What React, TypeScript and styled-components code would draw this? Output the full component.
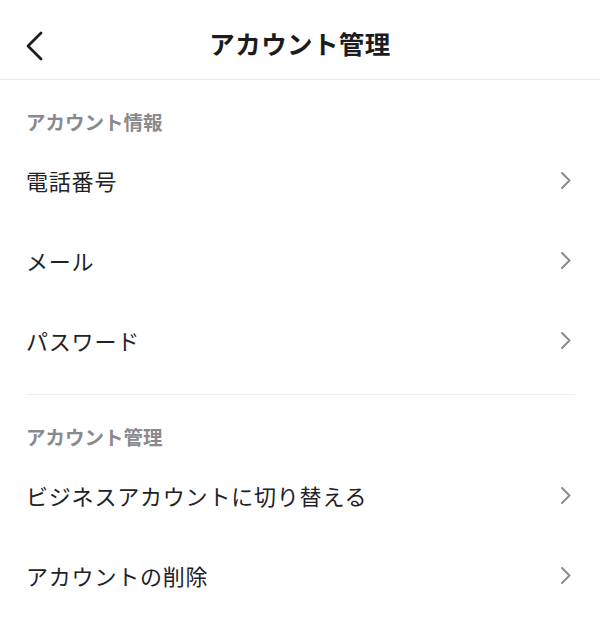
import React from "react";
import styled, { createGlobalStyle } from "styled-components";

const Global = createGlobalStyle`
  html, body { margin: 0; padding: 0; background: #ffffff; }
  body { font-family: "Noto Sans CJK JP", "Noto Sans", sans-serif; color: #1f1f22; }
`;

const Page = styled.div`
  width: 600px;
  min-height: 633px;
  background: #fff;
`;

const Header = styled.header`
  height: 80px;
  box-sizing: border-box;
  padding-top: 4px;
  border-bottom: 1px solid #e9e9ea;
  display: grid;
  grid-template-columns: 80px 1fr 80px;
  align-items: center;
`;

const BackButton = styled.button`
  border: 0;
  background: none;
  padding: 0 0 0 25px;
  margin-top: 8px;
  height: 40px;
  display: flex;
  align-items: center;
  cursor: pointer;
  color: #1c1c1e;
`;

const Title = styled.h1`
  margin: 0;
  padding-top: 2px;
  text-align: center;
  font-size: 25.5px;
  font-weight: 700;
  letter-spacing: 0.4px;
  line-height: 32px;
  color: #1c1c1e;
`;

const Section = styled.section`
  padding-top: 30px;
`;

const SectionTitle = styled.h2`
  margin: 0 0 6px;
  padding: 0 26px;
  font-size: 19.5px;
  line-height: 24px;
  font-weight: 700;
  color: #8a8a8e;
`;

const Row = styled.div`
  height: 80px;
  display: flex;
  align-items: center;
  justify-content: space-between;
  padding: 0 28px 0 26px;
  cursor: pointer;
`;

const RowLabel = styled.span`
  font-size: 22px;
  font-weight: 400;
  letter-spacing: 0.8px;
  color: #222226;
`;

const Divider = styled.hr`
  margin: 14px 25px 0 26px;
  border: 0;
  border-top: 1px solid #eeeeef;
`;

const Back = () => (
  <svg width="18" height="30" viewBox="0 0 18 30" fill="none">
    <path d="M16 2 L3 15 L16 28" stroke="#1c1c1e" strokeWidth="2.8" strokeLinecap="round" strokeLinejoin="round" />
  </svg>
);

const Chevron = () => (
  <svg width="12" height="19" viewBox="0 0 12 19" fill="none">
    <path d="M2 2 L9.5 9.5 L2 17" stroke="#8b8b8e" strokeWidth="2" strokeLinecap="round" strokeLinejoin="round" />
  </svg>
);

const Item = ({ label }: { label: string }) => (
  <Row>
    <RowLabel>{label}</RowLabel>
    <Chevron />
  </Row>
);

export default function App() {
  return (
    <Page>
      <Global />
      <Header>
        <BackButton aria-label="戻る">
          <Back />
        </BackButton>
        <Title>アカウント管理</Title>
        <div />
      </Header>
      <Section>
        <SectionTitle>アカウント情報</SectionTitle>
        <Item label="電話番号" />
        <Item label="メール" />
        <Item label="パスワード" />
        <Divider />
      </Section>
      <Section>
        <SectionTitle>アカウント管理</SectionTitle>
        <Item label="ビジネスアカウントに切り替える" />
        <Item label="アカウントの削除" />
      </Section>
    </Page>
  );
}
